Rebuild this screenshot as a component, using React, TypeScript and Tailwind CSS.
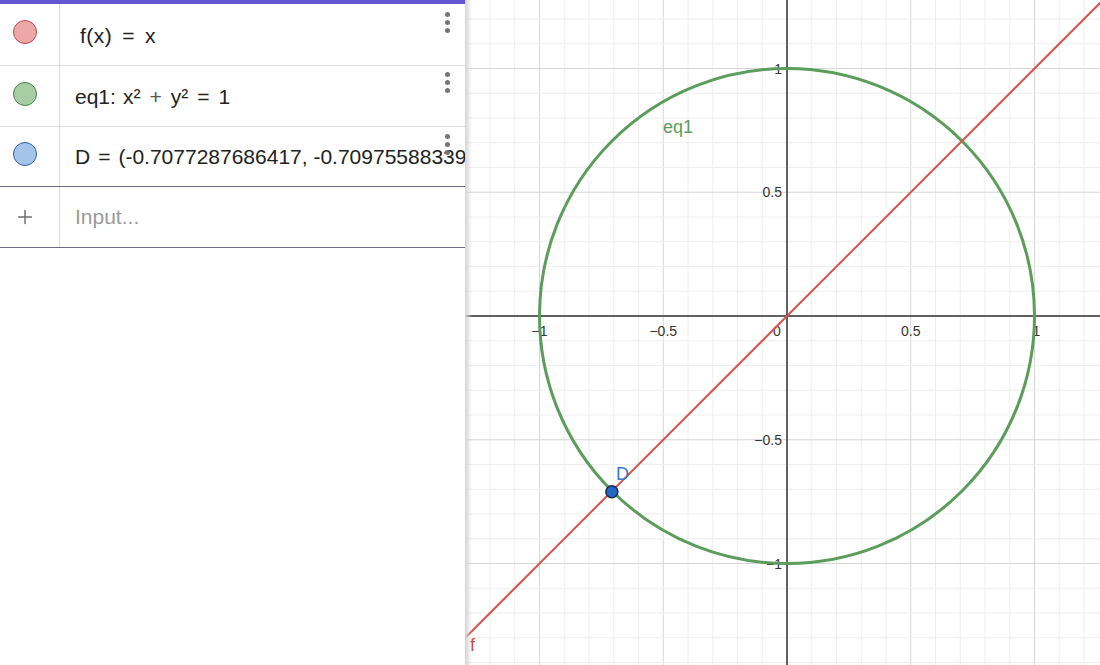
import { Plus } from "lucide-react";

const S = 247.5;
const OX = 322;
const OY = 316;

function Dots() {
  return (
    <div className="flex flex-col gap-[3px]">
      <span className="w-[5px] h-[5px] rounded-full bg-[#757575]" />
      <span className="w-[5px] h-[5px] rounded-full bg-[#757575]" />
      <span className="w-[5px] h-[5px] rounded-full bg-[#757575]" />
    </div>
  );
}

function Row({
  fill,
  stroke,
  children,
  h,
  dotsTop,
  textPad,
  border,
}: {
  fill: string;
  stroke: string;
  children: React.ReactNode;
  h: string;
  dotsTop: string;
  textPad: string;
  border: string;
}) {
  return (
    <div className={`flex ${h} border-b ${border}`}>
      <div className="w-[60px] shrink-0 border-r border-[#dcdcdc] flex items-center justify-center pb-[5px] pr-[10px]">
        <span
          className="w-[24px] h-[24px] rounded-full border"
          style={{ background: fill, borderColor: stroke }}
        />
      </div>
      <div className={`relative flex-1 flex items-center overflow-hidden whitespace-nowrap ${textPad}`}>
        {children}
        <div className={`absolute right-[15px] ${dotsTop}`}>
          <Dots />
        </div>
      </div>
    </div>
  );
}

function Graph() {
  const minorX: number[] = [];
  for (let k = -13; k <= 13; k++) minorX.push(k);
  const minorY: number[] = [];
  for (let k = -13; k <= 14; k++) minorY.push(k);
  const D = { x: OX - 0.7077287686417 * S, y: OY + 0.70975588339 * S };

  return (
    <svg width="635" height="665" className="block">
      <rect width="635" height="665" fill="#ffffff" />
      {minorX.map((k) => (
        <line key={"vx" + k} x1={OX + (k * S) / 10} y1={0} x2={OX + (k * S) / 10} y2={665} stroke={k % 5 === 0 ? "#d6d6d6" : "#eeeeee"} strokeWidth="1" />
      ))}
      {minorY.map((k) => (
        <line key={"hy" + k} x1={0} y1={OY + (k * S) / 10} x2={635} y2={OY + (k * S) / 10} stroke={k % 5 === 0 ? "#d6d6d6" : "#eeeeee"} strokeWidth="1" />
      ))}
      <line x1={0} y1={OY} x2={635} y2={OY} stroke="#333" strokeWidth="1.5" />
      <line x1={OX} y1={0} x2={OX} y2={665} stroke="#333" strokeWidth="1.5" />

      <g fontFamily="'Liberation Sans', Arial, sans-serif" fontSize="14" fill="#333">
        <text x={OX - S} y={336} textAnchor="middle">−1</text>
        <text x={OX - S / 2} y={336} textAnchor="middle">−0.5</text>
        <text x={OX - 10} y={336} textAnchor="middle">0</text>
        <text x={OX + S / 2} y={336} textAnchor="middle">0.5</text>
        <text x={OX + S + 2} y={336} textAnchor="middle">1</text>
        <text x={OX - 5} y={OY - S + 5} textAnchor="end">1</text>
        <text x={OX - 5} y={OY - S / 2 + 5} textAnchor="end">0.5</text>
        <text x={OX - 5} y={OY + S / 2 + 5} textAnchor="end">−0.5</text>
        <text x={OX - 5} y={OY + S + 5} textAnchor="end">−1</text>
      </g>

      <circle cx={OX} cy={OY} r={S} fill="none" stroke="#5c9c5c" strokeWidth="3" />
      <line x1={-10} y1={OY + OX + 10} x2={650} y2={OY - (650 - OX)} stroke="#d9534f" strokeWidth="2" />
      <circle cx={D.x} cy={D.y} r={6} fill="#2466c4" stroke="#1b2a44" strokeWidth="1.5" />

      <g fontFamily="'Liberation Sans', Arial, sans-serif" fontSize="18">
        <text x={198} y={133} fill="#5c9c5c">eq1</text>
        <text x={151} y={480} fill="#3d7bc8">D</text>
        <text x={5} y={651} fill="#c0504d">f</text>
      </g>
    </svg>
  );
}

export default function App() {
  return (
    <div className="flex w-[1100px] h-[665px] overflow-hidden bg-white font-['Liberation_Sans',Arial,sans-serif]">
      <div className="w-[465px] shrink-0 flex flex-col bg-white z-10">
        <div className="h-[4px] bg-[#6557d2]" />
        <Row fill="#eea7a7" stroke="#b34b50" h="h-[62px]" dotsTop="top-[8px]" textPad="pl-[20px] pt-[3px]" border="border-[#dcdcdc]">
          <span className="text-[21px] text-[#222] tracking-[0.5px]">
            f(x)<span className="px-[10px]">=</span>x
          </span>
        </Row>
        <Row fill="#a7cda5" stroke="#4e7d4e" h="h-[61px]" dotsTop="top-[6px]" textPad="pl-[15px] pt-[2px]" border="border-[#dcdcdc]">
          <span className="text-[21px] text-[#222]">
            eq1:<span className="pl-[7px]">x²</span>
            <span className="px-[9px] text-[#555]">+</span>y²
            <span className="px-[9px]">=</span>1
          </span>
        </Row>
        <Row fill="#a4c4ec" stroke="#34609a" h="h-[60px]" dotsTop="top-[7px]" textPad="pl-[15px]" border="border-[#6b6b85]">
          <span className="text-[21px] text-[#222]">
            D<span className="px-[8px]">=</span>(-0.7077287686417, -0.70975588339
          </span>
        </Row>
        <div className="flex h-[61px] border-b border-[#6b6b85]">
          <div className="w-[60px] shrink-0 border-r border-[#dcdcdc] flex items-center justify-center pr-[10px]">
            <Plus size={22} strokeWidth={1.6} color="#6e6e6e" />
          </div>
          <div className="flex-1 flex items-center pl-[15px]">
            <span className="text-[21px] text-[#9a9a9a]">Input...</span>
          </div>
        </div>
      </div>
      <div className="relative flex-1">
        <div className="absolute left-0 top-0 h-full w-[7px] bg-gradient-to-r from-[#d4d4d4] to-transparent pointer-events-none" />
        <Graph />
      </div>
    </div>
  );
}
